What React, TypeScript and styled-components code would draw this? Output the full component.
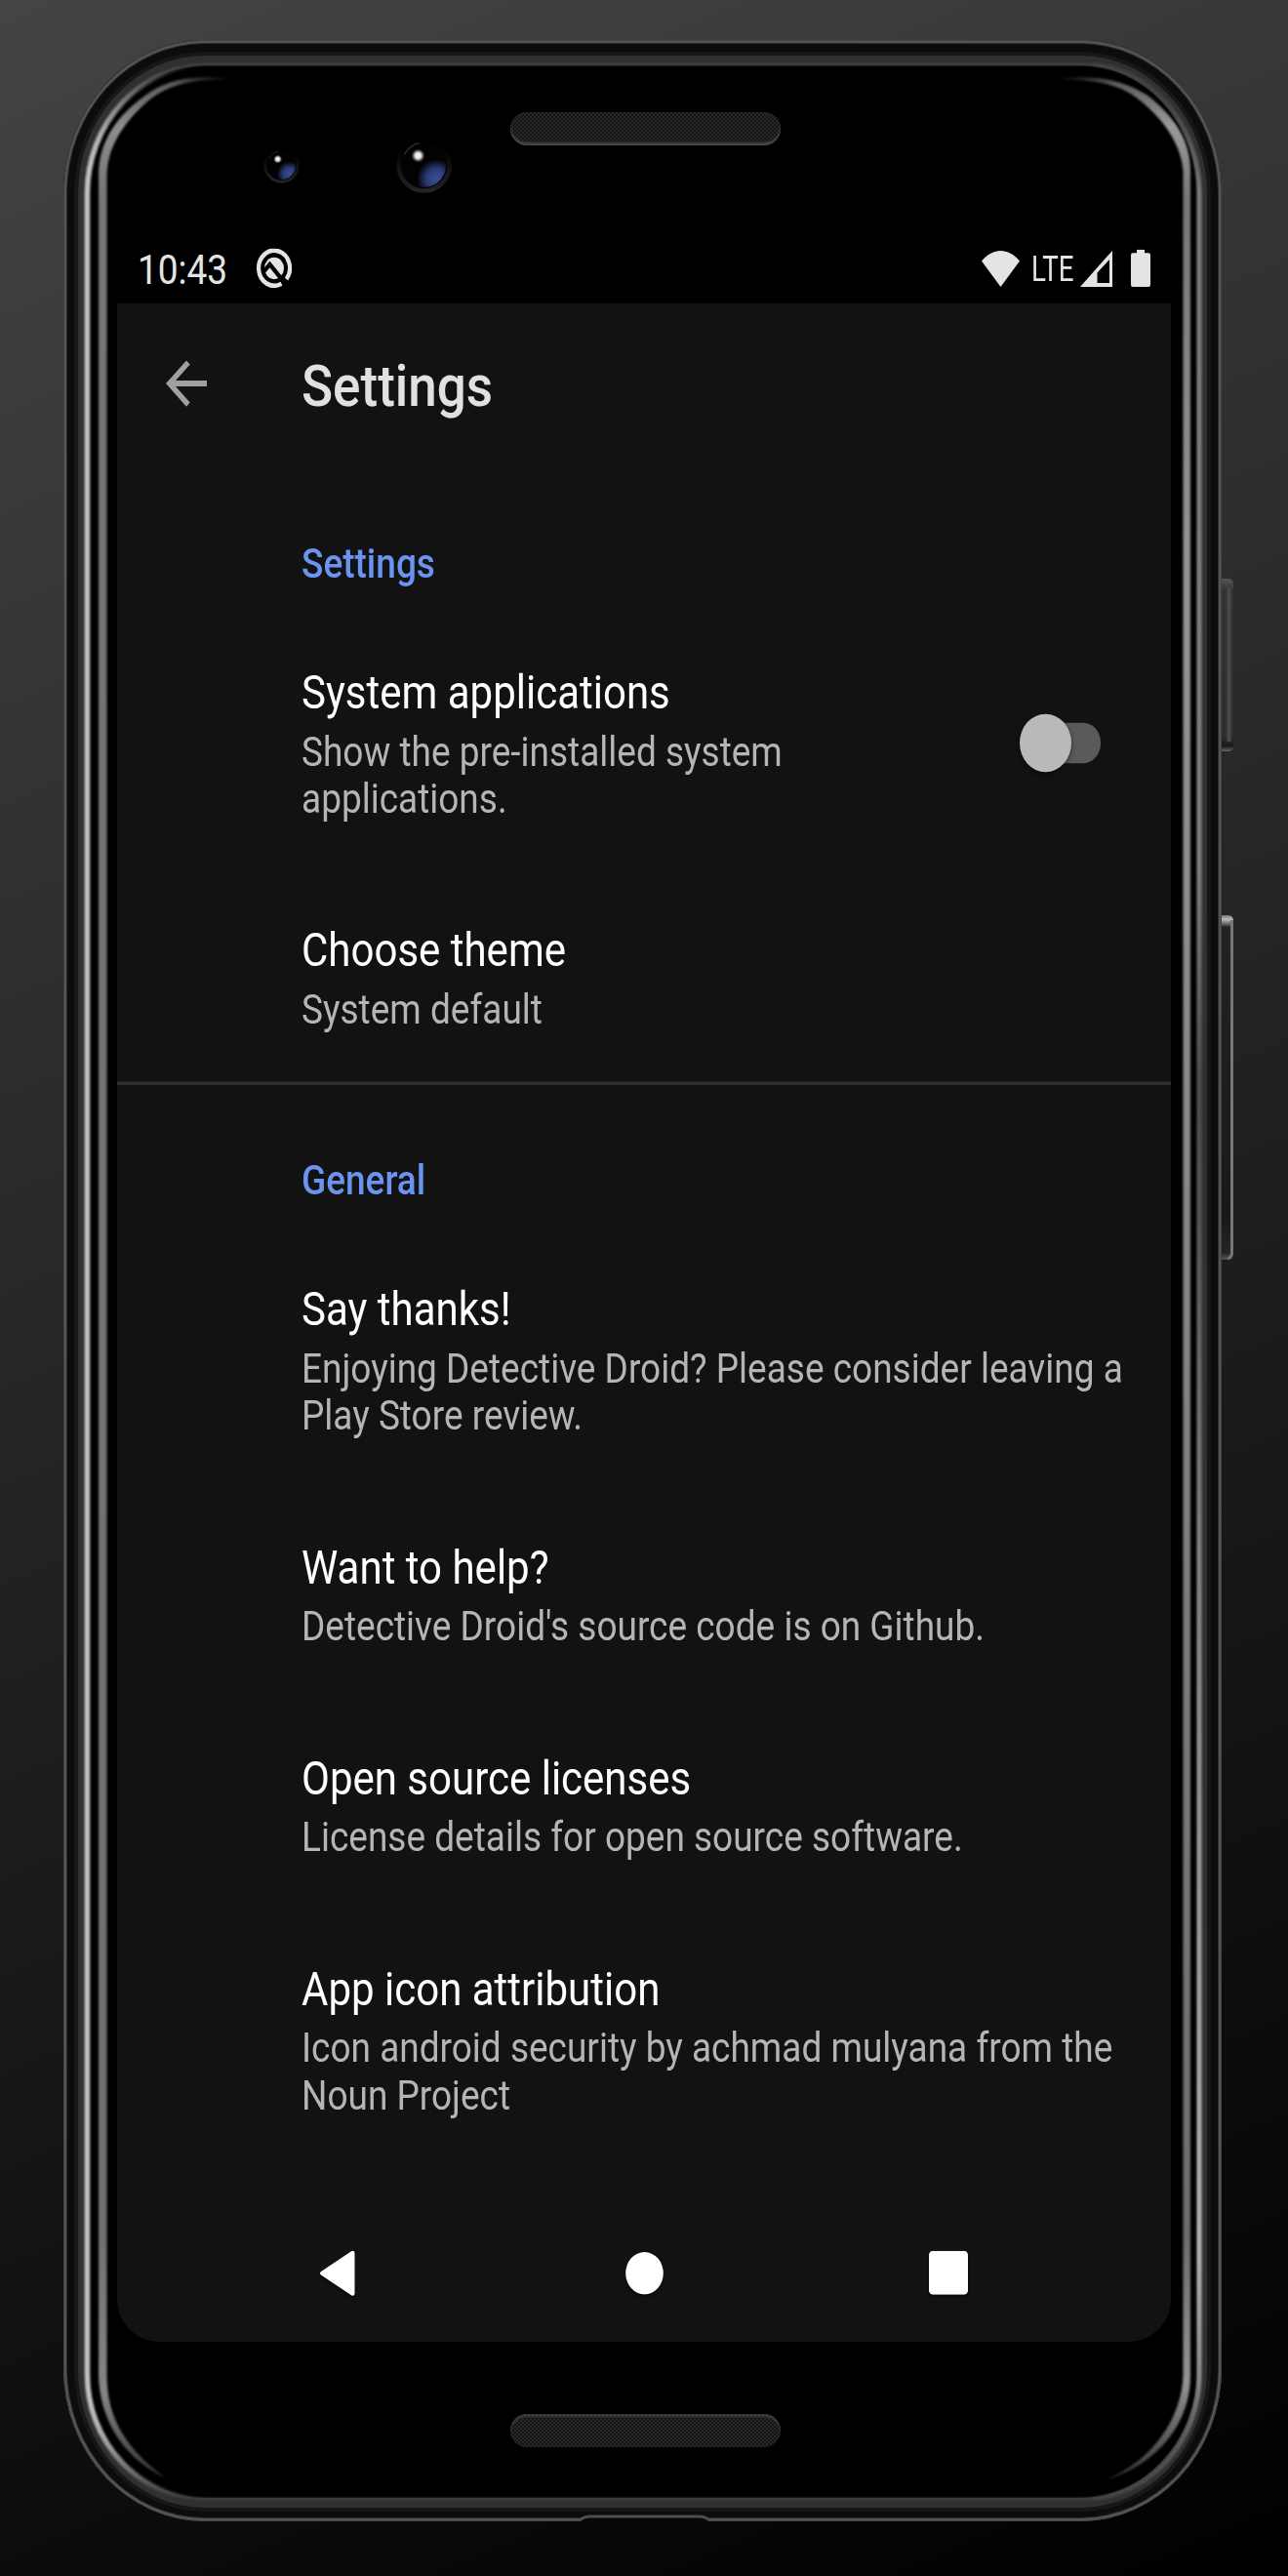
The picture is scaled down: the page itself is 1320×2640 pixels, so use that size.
import React from 'react';
import styled, { createGlobalStyle } from 'styled-components';

const GlobalStyle = createGlobalStyle`
  * { box-sizing: border-box; }
  html, body { margin: 0; padding: 0; background: #000; }
  body { font-family: Roboto, 'Liberation Sans', sans-serif; }
`;

const Backdrop = styled.main`
  position: relative;
  width: 1320px;
  height: 2640px;
  padding: 41px 68px 56px 65px;
  overflow: hidden;
  background: linear-gradient(157deg, #444 0%, #000 100%);
`;

const Body = styled.div`
  width: 1187px;
  height: 2543px;
  padding: 74px 52px 0 55px;
  border-radius: 145px / 157px;
  background: #000;
  box-shadow:
    inset 0 0 0 1px #434343,
    inset 0 0 0 3px #555,
    inset 0 0 0 4px #2a2a2a,
    inset 0 1px 0 11px #0c0c0c,
    inset 0 1px 0 15px #171717,
    inset 0 1px 0 25px #303030;
`;

const Bezel = styled.div<{ $height: number; $offset?: number }>`
  display: flex;
  justify-content: center;
  height: ${(p) => p.$height}px;
  padding-top: ${(p) => p.$offset ?? 0}px;
`;

const Speaker = styled.div<{ $lip: 'top' | 'bottom' }>`
  width: 277px;
  height: 34px;
  margin-left: 3px;
  border-radius: 17px;
  background: repeating-conic-gradient(#131313 0 25%, #2a2a2a 0 50%) 0 0 / 4px 4px;
  box-shadow: ${(p) =>
    p.$lip === 'bottom'
      ? 'inset 0 -3px 2px #454545, inset 0 0 2px 1px #262626'
      : 'inset 0 3px 2px #3a3a3a, inset 0 0 2px 1px #202020'};
`;

const ScreenSlot = styled.div`
  width: 1080px;
  height: 2160px;
`;

/* The display is laid out at 1080x1920 and shown on a taller panel. */
const Screen = styled.div`
  display: flex;
  flex-direction: column;
  width: 1080px;
  height: 1920px;
  transform: scaleY(1.125);
  transform-origin: 0 0;
  border-radius: 44px / 39px;
  overflow: hidden;
  background: #121212;
`;

const StatusBar = styled.header`
  display: flex;
  flex: none;
  align-items: center;
  height: 63px;
  padding: 0 21px;
  background: #000;
  color: #e4e4e4;
`;

const Clock = styled.span`
  padding-top: 3px;
  font-size: 37px;
  line-height: 60px;
`;

const StatusGap = styled.div`
  flex: 1;
`;

const StatusGlyph = styled.svg<{ $gap: number; $lift?: number }>`
  display: block;
  flex: none;
  margin-left: ${(p) => p.$gap}px;
  margin-bottom: ${(p) => p.$lift ?? 0}px;
`;

const Network = styled.span`
  display: block;
  width: 45px;
  margin-left: 12px;
  font-size: 33px;
  font-weight: 400;
  line-height: 62px;
  white-space: nowrap;
  transform: scaleX(0.84);
  transform-origin: 0 50%;
`;

const Toolbar = styled.div`
  display: flex;
  flex: none;
  align-items: center;
  height: 147px;
  padding-left: 50px;
`;

const ToolbarTitle = styled.h1`
  margin: 0 0 0 97px;
  padding-top: 3px;
  color: #e1e1e1;
  font-size: 53px;
  font-weight: 500;
  line-height: 62px;
`;

const List = styled.section`
  flex: 1;
  padding-top: 2.7px;
`;

const Category = styled.h2`
  margin: 0;
  padding: 66px 42px 23px 189px;
  color: #6a94ef;
  font-size: 37px;
  font-weight: 500;
  line-height: 43px;
`;

const Divider = styled.hr`
  height: 3px;
  margin: 0;
  border: 0;
  background: #2f2f2f;
`;

const Item = styled.div`
  display: flex;
  align-items: center;
  padding: 48.5px 39px 43.8px 189px;
`;

const ItemText = styled.div`
  flex: 1;
  min-width: 0;
`;

const ItemTitle = styled.div`
  color: #fff;
  font-size: 42px;
  line-height: 49.2px;
`;

const ItemSummary = styled.div`
  margin-top: 7.5px;
  color: #b5b5b5;
  font-size: 37px;
  line-height: 43px;
`;

const Toggle = styled.div`
  display: flex;
  flex: none;
  align-items: center;
  justify-content: flex-end;
  width: 124px;
  margin: 0 33px 3px 0;
`;

const Track = styled.div`
  display: flex;
  align-items: center;
  width: 71px;
  height: 37px;
  border-radius: 18px;
  background: #5a5a5a;
`;

const Knob = styled.div`
  flex: none;
  width: 53px;
  height: 53px;
  margin-left: -12px;
  border-radius: 50%;
  background: #b9b9b9;
  box-shadow: 0 2px 5px rgba(0, 0, 0, 0.45);
`;

const NavBar = styled.nav`
  display: grid;
  flex: none;
  grid-template-columns: 311px 320px 302px;
  align-items: center;
  justify-items: center;
  height: 126px;
  padding-left: 69.5px;
`;

const NavIcon = styled.svg`
  display: block;
  filter: drop-shadow(0 2px 1px rgba(0, 0, 0, 0.5));
`;

const ArrowIcon = styled.svg`
  display: block;
  flex: none;
  margin-bottom: 1.5px;
`;

const Artwork = styled.svg`
  position: absolute;
  inset: 0;
  pointer-events: none;
`;

type Entry = { title: string; summary: string; toggle?: boolean };

const groups: { name: string; entries: Entry[] }[] = [
  {
    name: 'Settings',
    entries: [
      { title: 'System applications', summary: 'Show the pre-installed system applications.', toggle: true },
      { title: 'Choose theme', summary: 'System default' },
    ],
  },
  {
    name: 'General',
    entries: [
      { title: 'Say thanks!', summary: 'Enjoying Detective Droid? Please consider leaving a Play Store review.' },
      { title: 'Want to help?', summary: "Detective Droid's source code is on Github." },
      { title: 'Open source licenses', summary: 'License details for open source software.' },
      { title: 'App icon attribution', summary: 'Icon android security by achmad mulyana from the Noun Project' },
    ],
  },
];

function Camera({ cx, cy, r }: { cx: number; cy: number; r: number }) {
  return (
    <g transform={`translate(${cx} ${cy}) scale(${r / 28})`}>
      <circle r="26" fill="#020203" stroke="url(#rim)" strokeWidth="4.5" />
      <circle r="22.5" fill="url(#lens)" />
      <circle cx="-6" cy="-10" r="7" fill="url(#spark)" />
      <path d="M-20-11A23 23 0 0 1-5-23" fill="none" stroke="#2b2b2b" strokeWidth="1.5" />
    </g>
  );
}

function DeviceArtwork() {
  return (
    <Artwork width="1320" height="2640" viewBox="0 0 1320 2640" aria-hidden="true">
      <defs>
        <linearGradient id="rim" x1="0" y1="0" x2="0" y2="1">
          <stop offset="0.2" stopColor="#000" />
          <stop offset="0.55" stopColor="#121213" />
          <stop offset="1" stopColor="#222326" />
        </linearGradient>
        <radialGradient id="lens" cx="0.78" cy="0.8" r="0.44">
          <stop offset="0" stopColor="#3a4c90" />
          <stop offset="0.5" stopColor="#2c3b78" />
          <stop offset="1" stopColor="#2c3b78" stopOpacity="0" />
        </radialGradient>
        <radialGradient id="spark">
          <stop offset="0" stopColor="#fff" />
          <stop offset="0.45" stopColor="#ddd" />
          <stop offset="1" stopColor="#888" stopOpacity="0" />
        </radialGradient>
        <linearGradient id="edgeL" gradientUnits="userSpaceOnUse" x1="88" y1="0" x2="200" y2="0">
          <stop offset="0" stopColor="#c4c4c4" />
          <stop offset="0.12" stopColor="#b0b0b0" />
          <stop offset="0.5" stopColor="#777" stopOpacity="0.6" />
          <stop offset="1" stopColor="#444" stopOpacity="0" />
        </linearGradient>
        <linearGradient id="edgeR" gradientUnits="userSpaceOnUse" x1="0" y1="100" x2="0" y2="2560">
          <stop offset="0" stopColor="#555" stopOpacity="0.3" />
          <stop offset="0.04" stopColor="#7b7b7b" />
          <stop offset="0.32" stopColor="#808080" />
          <stop offset="0.41" stopColor="#4b4d4a" />
          <stop offset="0.47" stopColor="#555" />
          <stop offset="0.6" stopColor="#808080" />
          <stop offset="0.9" stopColor="#b5b5b5" />
          <stop offset="0.95" stopColor="#8a8a8a" />
          <stop offset="1" stopColor="#555" stopOpacity="0.3" />
        </linearGradient>
        <linearGradient id="glossL" gradientUnits="userSpaceOnUse" x1="0" y1="80" x2="0" y2="2540">
          <stop offset="0" stopColor="#555" />
          <stop offset="0.02" stopColor="#8d8d8d" />
          <stop offset="0.05" stopColor="#757575" />
          <stop offset="0.9" stopColor="#707070" />
          <stop offset="0.965" stopColor="#858585" />
          <stop offset="1" stopColor="#333" />
        </linearGradient>
        <linearGradient id="glossR" gradientUnits="userSpaceOnUse" x1="0" y1="80" x2="0" y2="2540">
          <stop offset="0" stopColor="#555" />
          <stop offset="0.02" stopColor="#9a9a9a" />
          <stop offset="0.05" stopColor="#777" />
          <stop offset="0.2" stopColor="#939393" />
          <stop offset="0.5" stopColor="#858585" />
          <stop offset="0.9" stopColor="#6c6c6c" />
          <stop offset="0.96" stopColor="#939393" />
          <stop offset="1" stopColor="#333" />
        </linearGradient>
        <linearGradient id="tipL" gradientUnits="userSpaceOnUse" x1="175" y1="0" x2="236" y2="0">
          <stop offset="0" stopColor="#fff" />
          <stop offset="1" stopColor="#000" />
        </linearGradient>
        <mask id="fadeL" maskUnits="userSpaceOnUse" x="60" y="60" width="200" height="2520">
          <rect x="60" y="60" width="200" height="2520" fill="url(#tipL)" />
        </mask>
        <linearGradient id="tipR" gradientUnits="userSpaceOnUse" x1="1145" y1="0" x2="1084" y2="0">
          <stop offset="0" stopColor="#fff" />
          <stop offset="1" stopColor="#000" />
        </linearGradient>
        <mask id="fadeR" maskUnits="userSpaceOnUse" x="1060" y="60" width="200" height="2520">
          <rect x="1060" y="60" width="200" height="2520" fill="url(#tipR)" />
        </mask>
        <filter id="soften" filterUnits="userSpaceOnUse" x="60" y="40" width="1200" height="2560">
          <feGaussianBlur stdDeviation="0.9" />
        </filter>
        <linearGradient id="power" x1="0" y1="0" x2="0" y2="1">
          <stop offset="0" stopColor="#555" />
          <stop offset="0.07" stopColor="#333" />
          <stop offset="0.92" stopColor="#2e2e2e" />
          <stop offset="0.97" stopColor="#191919" />
          <stop offset="1" stopColor="#666" />
        </linearGradient>
        <linearGradient id="volume" x1="0" y1="0" x2="0" y2="1">
          <stop offset="0" stopColor="#777" />
          <stop offset="0.012" stopColor="#bbb" />
          <stop offset="0.035" stopColor="#222" />
          <stop offset="0.88" stopColor="#191919" />
          <stop offset="0.98" stopColor="#252525" />
          <stop offset="1" stopColor="#555" />
        </linearGradient>
      </defs>

      {/* side keys */}
      <path d="M1252 593h7q5 0 5 6V764q0 6-5 6h-7z" fill="url(#power)" />
      <path d="M1259.500 602V760" stroke="#484848" strokeWidth="4" />
      <path d="M1252 938h7q5 0 5 6V1285q0 6-6 6h-6z" fill="url(#volume)" />
      <path d="M1262.500 943V1284q0 4-4 6" fill="none" stroke="#777" strokeWidth="3" />

      {/* metal edge */}
      <g fill="none" filter="url(#soften)">
        <path
          d="M215 66H1106A120 131 0 0 1 1229 198V2434A120 127 0 0 1 1106 2561H212A122 127 0 0 1 90 2434V198A122 131 0 0 1 215 66Z"
          stroke="#464646"
          strokeWidth="2"
        />
        <path
          d="M215 66A125 132 0 0 0 89.500 198V2434A122 127 0 0 0 212 2561"
          stroke="url(#edgeL)"
          strokeWidth="5.500"
        />
        <path
          d="M1120 66A115 132 0 0 1 1229 198V2434A120 127 0 0 1 1120 2561"
          stroke="url(#edgeR)"
          strokeWidth="5"
        />
      </g>

      {/* glass reflections */}
      <g filter="url(#soften)">
        <path
          mask="url(#fadeL)"
          d="M236 79.500C200 78 175 79 150 97C120 118 101 145 101 180V2435C102 2470 118 2515 170 2540C130 2510 110 2480 109.500 2435V180C110 155 122 130 150 105C175 84 200 82 236 81.500Z"
          fill="url(#glossL)"
        />
        <path
          mask="url(#fadeR)"
          d="M1084 79.500C1120 78 1145 79 1175 97C1205 120 1220 145 1220 175V2435C1220 2480 1190 2525 1132 2542C1185 2520 1211 2475 1212.500 2435V175C1211 155 1200 130 1172 106C1150 86 1125 82 1084 81.500Z"
          fill="url(#glossR)"
        />
      </g>

      {/* charging port notch */}
      <path d="M594 2585L600 2580H722L727 2585Z" fill="#070707" />
      <path d="M593 2583Q599 2579 605 2579H717Q722 2579 728 2583" fill="none" stroke="#4d4d4d" strokeWidth="3" />

      <Camera cx={288.500} cy={169.500} r={18} />
      <Camera cx={434.500} cy={169.500} r={28} />
    </Artwork>
  );
}

function BackArrow() {
  return (
    <ArrowIcon width="42" height="42" viewBox="0 0 16 16" aria-hidden="true">
      <path d="M16 7H3.830L9.420 1.410L8 0L0 8L8 16L9.410 14.590L3.830 9H16Z" fill="#a0a0a0" />
    </ArrowIcon>
  );
}

export default function App() {
  return (
    <>
      <GlobalStyle />
      <Backdrop>
        <Body>
          <Bezel $height={125}>
            <Speaker $lip="bottom" />
          </Bezel>
          <ScreenSlot>
            <Screen>
              <StatusBar>
                <Clock>10:43</Clock>
                <StatusGlyph $gap={29.5} $lift={2} width="36" height="36" viewBox="0 0 36 36">
                  <path d="M30.500 28A16 16 0 1 0 25.500 32.100" fill="none" stroke="#e4e4e4" strokeWidth="4.200" />
                  <circle cx="18" cy="18" r="10" fill="#e4e4e4" />
                  <path d="M6 22.500L13.500 14.500L27 29.500" fill="none" stroke="#000" strokeWidth="4" />
                </StatusGlyph>
                <StatusGap />
                <StatusGlyph $gap={0} $lift={1} width="39" height="33" viewBox="0 0 40 33" preserveAspectRatio="none">
                  <path d="M0 9.500C12-3 28-3 40 9.500L20 33Z" fill="#e4e4e4" />
                </StatusGlyph>
                <Network>LTE</Network>
                <StatusGlyph $gap={5} $lift={1} width="33" height="33" viewBox="0 0 33 33">
                  <path d="M33 0V33H0ZM30 8L17.500 20V29.500H30Z" fill="#e4e4e4" fillRule="evenodd" />
                </StatusGlyph>
                <StatusGlyph $gap={19} $lift={1} width="20" height="34" viewBox="0 0 20 34">
                  <path d="M6 0H14V3H18Q20 3 20 5V32Q20 34 18 34H2Q0 34 0 32V5Q0 3 2 3H6Z" fill="#e4e4e4" />
                </StatusGlyph>
              </StatusBar>

              <Toolbar>
                <BackArrow />
                <ToolbarTitle>Settings</ToolbarTitle>
              </Toolbar>

              <List>
                {groups.map((group, i) => (
                  <React.Fragment key={group.name}>
                    {i > 0 && <Divider />}
                    <Category>{group.name}</Category>
                    {group.entries.map((entry) => (
                      <Item key={entry.title}>
                        <ItemText>
                          <ItemTitle>{entry.title}</ItemTitle>
                          <ItemSummary>{entry.summary}</ItemSummary>
                        </ItemText>
                        {entry.toggle && (
                          <Toggle>
                            <Track>
                              <Knob />
                            </Track>
                          </Toggle>
                        )}
                      </Item>
                    ))}
                  </React.Fragment>
                ))}
              </List>

              <NavBar>
                <NavIcon width="37" height="43" viewBox="0 0 37 43">
                  <path d="M2 20L33 1.500Q36 0 36.500 3V40Q36 43 33 41.500L2 23Q0 21.500 2 20Z" fill="#fff" />
                </NavIcon>
                <NavIcon width="39" height="39" viewBox="0 0 39 39">
                  <circle cx="19.500" cy="19.500" r="19.300" fill="#fff" />
                </NavIcon>
                <NavIcon width="40" height="40" viewBox="0 0 40 40">
                  <rect width="40" height="40" rx="4" fill="#fff" />
                </NavIcon>
              </NavBar>
            </Screen>
          </ScreenSlot>
          <Bezel $height={110} $offset={74}>
            <Speaker $lip="top" />
          </Bezel>
        </Body>
        <DeviceArtwork />
      </Backdrop>
    </>
  );
}
